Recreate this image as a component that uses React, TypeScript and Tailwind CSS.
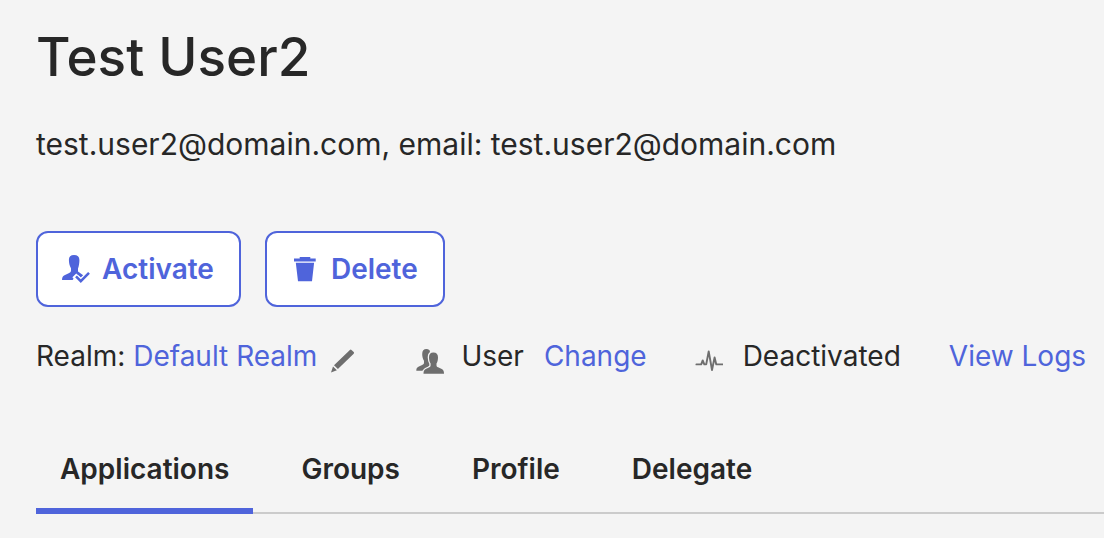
const buttonStyle =
  'flex h-19 items-center gap-3 rounded-xl border-2 border-[#4f64db] bg-white pr-[25px] pl-6 font-semibold text-[#4f64db]'
const linkStyle = 'text-[#4f64db]'
const statusIcon = 'size-7 shrink-0 self-end text-[#6e6e6e]'

function PersonCheckIcon() {
  return (
    <svg className="size-7" viewBox="0 0 28 28" fill="currentColor" aria-hidden="true">
      <path d="M12 0C8.6 0 6.9 1.7 6.9 4.8c0 3 .6 6.2 2.1 8.4v2.6c0 1.2-1 1.8-2.3 2.5L2.5 20.2C.7 21.2 0 22.5 0 25h10.6l1-1.2-1.2-1.6 3.8-3.8 4.6 4 2.4-2.2-5.2-3.6v-3c.9-2.3 1.4-5.4 1.4-8.5C17.4 1.6 15.5 0 12 0Z" />
      <path d="m14 21.3 4.8 4.9 8-8" fill="none" stroke="white" strokeWidth="4.6" />
      <path d="m14 21.3 4.8 4.9 8.2-8.4" fill="none" stroke="currentColor" strokeWidth="2.5" />
    </svg>
  )
}

function TrashIcon() {
  return (
    <svg className="size-7" viewBox="0 0 28 28" fill="currentColor" aria-hidden="true">
      <path d="M8.7 2h10.6v1.4h5.4v3.2H3V3.4h5.7ZM4.8 7.8h18.3L21 26.3H7Z" />
    </svg>
  )
}

function PencilIcon() {
  return (
    <svg className={`${statusIcon} ml-3`} viewBox="0 -1 28 28" fill="currentColor" aria-hidden="true">
      <path d="M20.9 2.9q.8-.8 1.6 0l2.2 2.2q.8.8 0 1.6L8.9 22 5 18.2ZM4 19.4l3.9 3.9L2 25.4Z" />
    </svg>
  )
}

function PeopleIcon() {
  return (
    <svg className={`${statusIcon} ml-[59px]`} viewBox="0 -1 28 28" fill="currentColor" aria-hidden="true">
      <path d="M13.6 3.2C12.5 2.4 11.5 2.1 10.4 2.1 7.7 2.1 6.2 3.9 6.2 7c0 2.5.5 4.8 1.8 6.8v1.9c0 1.4-1 1.8-2.4 2.5L2.4 19.8C.8 20.6.3 21.8.3 23.8h6L14 19V5Z" />
      <path
        className="stroke-[#f4f4f4]"
        strokeWidth="2.6"
        paintOrder="stroke"
        d="M17.4 5.6c-3 0-4.4 1.7-4.4 4.6 0 2.6.5 4.6 1.6 6.4v1.9c0 1.3-1 1.7-2.2 2.3l-2.7 1.3c-1.6.8-2.2 2-2.2 4.7h20.5c0-2.7-.6-3.9-2.2-4.7l-2.7-1.3c-1.4-.6-2.6-1-2.6-2.3v-1.9c1-1.8 1.5-3.8 1.5-6.4 0-2.9-1.6-4.6-4.6-4.6Z"
      />
    </svg>
  )
}

function PulseIcon() {
  return (
    <svg
      className={`${statusIcon} ml-12`}
      viewBox="0 -1 28 28"
      fill="none"
      stroke="currentColor"
      strokeWidth="1.9"
      strokeLinecap="round"
      strokeLinejoin="round"
      aria-hidden="true"
    >
      <path d="M1.4 17.4h4.8l1.5-4 1.6 4h1.9L13.7 4.4 17 23l2.6-12.5 1.7 6.9h6.1" />
    </svg>
  )
}

const tabs = ['Applications', 'Groups', 'Profile', 'Delegate']

export default function App() {
  return (
    <main className="min-h-screen bg-[#f4f4f4] pt-[25px] pl-9 font-['Inter',sans-serif] text-[28px] leading-9 text-[#272727]">
      <h1 className="text-[53px] leading-16 font-medium">Test User2</h1>
      <p className="mt-[35px] text-[30px] leading-10">test.user2@domain.com, email: test.user2@domain.com</p>
      <div className="mt-[67px] flex gap-6">
        <button type="button" className={buttonStyle}>
          <PersonCheckIcon />
          Activate
        </button>
        <button type="button" className={buttonStyle}>
          <TrashIcon />
          Delete
        </button>
      </div>
      <div className="mt-[31px] flex whitespace-nowrap">
        <span>
          Realm:{' '}
          <a href="#realm" className={linkStyle}>
            Default Realm
          </a>
        </span>
        <PencilIcon />
        <PeopleIcon />
        <span className="ml-[17px]">User</span>
        <a href="#change" className={`${linkStyle} ml-5`}>
          Change
        </a>
        <PulseIcon />
        <span className="ml-5">Deactivated</span>
        <a href="#logs" className={`${linkStyle} ml-12`}>
          View Logs
        </a>
      </div>
      <nav className="mt-[77px] flex gap-6 border-b-2 border-[#cbcbcb] font-semibold">
        {tabs.map((tab, i) => (
          <a
            key={tab}
            href={`#${tab.toLowerCase()}`}
            aria-current={i === 0 ? 'page' : undefined}
            className={`-mb-0.5 border-b-6 px-6 pb-[21px] ${i === 0 ? 'border-[#4f64db]' : 'border-transparent'}`}
          >
            {tab}
          </a>
        ))}
      </nav>
    </main>
  )
}
